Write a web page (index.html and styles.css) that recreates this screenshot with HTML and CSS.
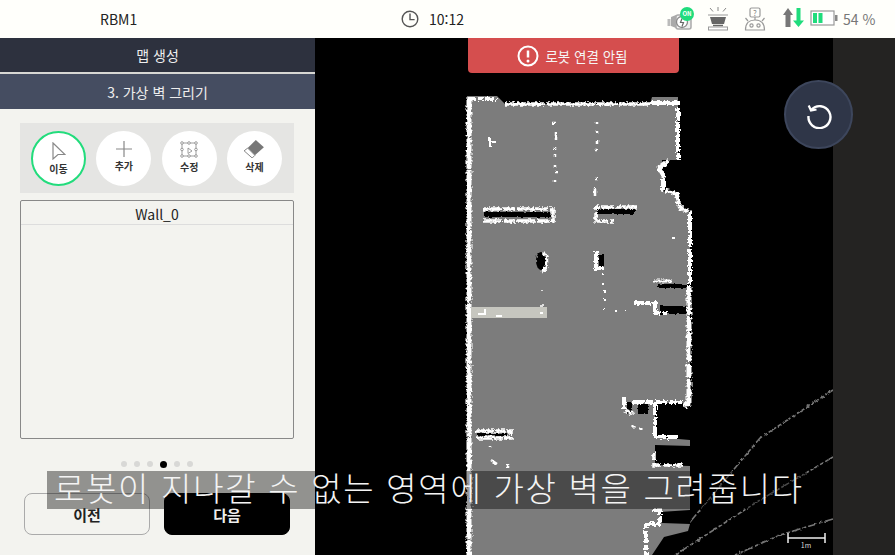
FILE: index.html
```html
<!DOCTYPE html>
<html lang="ko">
<head>
<meta charset="UTF-8">
<meta name="viewport" content="width=device-width, initial-scale=1.0">
<title>맵 생성</title>
<link rel="stylesheet" href="styles.css">
</head>
<body>
    <div class="screen">
        <header class="statusbar">
            <div class="robot-name">RBM1</div>
            <div class="clock">
                <svg width="20" height="20" viewBox="0 0 20 20" fill="none" stroke="#555" stroke-width="1.4"><circle cx="10" cy="10" r="7.8"/><path d="M10 4.5V10.6H14.6"/></svg>
                <span>10:12</span>
            </div>
            <div class="status-icons">
                <svg class="ic-camera" width="28" height="24" viewBox="0 0 28 24" fill="none">
                    <rect x="0.500" y="12" width="3" height="7" fill="#bbb"/>
                    <path d="M4 10l5-2v13l-5-2z" fill="#aaa"/>
                    <rect x="9" y="8" width="15" height="14" rx="2" fill="#eee" stroke="#aaa" stroke-width="1.500"/>
                    <circle cx="15" cy="15" r="5.500" fill="#fff" stroke="#888" stroke-width="1.300"/>
                    <path d="M15 11.500l-1.500 4h3l-1.500 4" stroke="#666" stroke-width="1.200"/>
                    <circle cx="20" cy="7" r="7" fill="#1fdc7c"/>
                    <text x="20" y="9" class="badge-text">ON</text>
                </svg>
                <svg class="ic-pot" width="22" height="24" viewBox="0 0 22 24" fill="none" stroke="#888">
                    <path d="M11 0v4M3 1l3 3.500M19 1l-3 3.500" stroke-width="1"/>
                    <path d="M1 8h20" stroke="#aaa" stroke-width="1.200"/>
                    <path d="M3 10h16l-2 7H5z" fill="#666" stroke="none"/>
                    <path d="M6 18.500h10" stroke="#666" stroke-width="1.500"/>
                    <rect x="1.500" y="20" width="19" height="3" fill="#fff" stroke="#999"/>
                </svg>
                <svg class="ic-robot" width="22" height="24" viewBox="0 0 22 24" fill="none" stroke="#999" stroke-width="1.200">
                    <rect x="6" y="1" width="10" height="9" rx="1.500"/>
                    <path d="M1.500 23C1.500 16 5 13 11 13S20.500 16 20.500 23z"/>
                    <path d="M4 14L1.500 11M18 14L20.500 11M11 10v3"/>
                    <circle cx="7.500" cy="18.500" r="1.600"/>
                    <circle cx="14.500" cy="18.500" r="1.600"/>
                    <text x="11" y="8.500" class="robot-mark">?</text>
                </svg>
                <svg class="ic-arrows" width="22" height="20" viewBox="0 0 22 20">
                    <path d="M6 0l5 7H8.500v12h-5V7H1z" fill="#777"/>
                    <path d="M14.500 0h4v12.500H22L16.500 19 11 12.500h3.500z" fill="#1fdc7c"/>
                </svg>
                <svg class="ic-battery" width="28" height="16" viewBox="0 0 28 16">
                    <rect x="1" y="1" width="23" height="14" fill="#fff" stroke="#999" stroke-width="1.200"/>
                    <rect x="3" y="3" width="4" height="10" fill="#1fdc7c"/>
                    <rect x="8.500" y="3" width="4" height="10" fill="#1fdc7c"/>
                    <rect x="25" y="5" width="2.500" height="6" fill="#888"/>
                </svg>
                <span class="battery-text">54 %</span>
            </div>
        </header>

        <div class="main">
            <aside class="panel">
                <div class="panel-title">맵 생성</div>
                <div class="panel-step">3. 가상 벽 그리기</div>
                <div class="panel-body">
                    <div class="toolbar">
                        <div class="tool active">
                            <svg width="14" height="18" viewBox="0 0 14 18" fill="none" stroke="#888" stroke-width="1.200"><path d="M1 1l12 11.500H6L1 17z"/></svg>
                            <span>이동</span>
                        </div>
                        <div class="tool">
                            <svg width="16" height="16" viewBox="0 0 16 16" stroke="#888" stroke-width="1.200"><path d="M8 0v16M0 8h16"/></svg>
                            <span>추가</span>
                        </div>
                        <div class="tool">
                            <svg width="18" height="17" viewBox="0 0 18 17" fill="none" stroke="#888" stroke-width="0.800"><rect x="2" y="2" width="14" height="13"/><g fill="#fff"><circle cx="2" cy="2" r="1.300"/><circle cx="9" cy="2" r="1.300"/><circle cx="16" cy="2" r="1.300"/><circle cx="2" cy="8.500" r="1.300"/><circle cx="16" cy="8.500" r="1.300"/><circle cx="2" cy="15" r="1.300"/><circle cx="9" cy="15" r="1.300"/><circle cx="16" cy="15" r="1.300"/></g><path d="M8 7l4 3-4 2.500z"/></svg>
                            <span>수정</span>
                        </div>
                        <div class="tool tool-erase">
                            <svg width="20" height="18" viewBox="0 0 22 20"><path d="M13 0l9 8-10 9-8-8z" fill="#777"/><path d="M4 9l8 8-3 3-9-8z" fill="#fff" stroke="#777"/></svg>
                            <span>삭제</span>
                        </div>
                    </div>
                    <div class="wall-list">
                        <div class="wall-row">Wall_0</div>
                    </div>
                    <div class="pager">
                        <i></i><i></i><i></i><i class="on"></i><i></i><i></i>
                    </div>
                    <div class="buttons">
                        <button class="btn">이전</button>
                        <button class="btn btn-dark">다음</button>
                    </div>
                </div>
            </aside>

            <div class="map">
                <svg class="map-canvas" width="518" height="517" viewBox="315 38 518 517">
                    <defs>
                        <filter id="rough" x="-5%" y="-5%" width="110%" height="110%" color-interpolation-filters="sRGB">
                            <feTurbulence type="fractalNoise" baseFrequency="0.4" numOctaves="2" seed="4"/>
                            <feDisplacementMap in="SourceGraphic" scale="5" xChannelSelector="R" yChannelSelector="G"/>
                        </filter>
                        <filter id="rough-soft" x="-5%" y="-5%" width="110%" height="110%" color-interpolation-filters="sRGB">
                            <feTurbulence type="fractalNoise" baseFrequency="0.3" numOctaves="2" seed="9"/>
                            <feDisplacementMap in="SourceGraphic" scale="3" xChannelSelector="R" yChannelSelector="G"/>
                        </filter>
                    </defs>

                    <!-- rays outside the room -->
                    <g fill="none" stroke="#777" stroke-width="1.600" stroke-dasharray="9 2 4 2" filter="url(#rough-soft)">
                        <path d="M833 390L760 438 690 522"/>
                        <path d="M833 457L760 500 675 555"/>
                        <path d="M833 519L780 535 735 555"/>
                    </g>

                    <!-- floor -->
                    <path class="floor" d="M467 96H497L505 104H650L652 97H678V160H662V191L678 194 680 208 690 212V403H655V437L690 440V446L655 445V465L690 466V510L660 512 662 523 690 524 688 531 664 537 652 555H467z"/>

                    <!-- black holes in the notches -->
                    <g fill="#000" filter="url(#rough-soft)">
                        <rect x="484" y="212" width="67" height="5"/>
                        <rect x="597" y="209" width="38" height="5"/>
                        <ellipse cx="541" cy="261" rx="5" ry="9"/>
                        <rect x="599" y="255" width="5" height="13"/>
                        <rect x="658" y="284" width="32" height="4"/>
                        <rect x="660" y="306" width="30" height="8"/>
                        <rect x="627" y="402" width="5" height="12"/>
                        <rect x="638" y="404" width="10" height="10"/>
                        <rect x="477" y="433" width="30" height="3"/>
                    </g>

                    <!-- walls -->
                    <g fill="none" stroke="#fff" filter="url(#rough)">
                        <path d="M469 97V555" stroke-width="5" stroke-dasharray="40 1 30 2 60 1"/>
                        <path d="M468 99H497" stroke-width="4" stroke-dasharray="8 2 5 3"/>
                        <path d="M505 104H650" stroke-width="3.500" stroke-dasharray="40 1 50 1 20 2"/>
                        <path d="M650 103H678V160" stroke-width="4" stroke-dasharray="30 2 14 1"/>
                        <path d="M668 161L659 168 663 175V190L677 194 680 208 690 212V285" stroke-width="4" stroke-dasharray="22 1 12 2"/>
                        <path d="M689 285V403L684 406" stroke-width="5" stroke-dasharray="30 2 14 1"/>
                        <path d="M484 209H553V221H484" stroke-width="3.500" stroke-dasharray="18 1 12 2"/>
                        <path d="M637 207H596V221H614" stroke-width="3.500" stroke-dasharray="14 1 6 2"/>
                        <path d="M544 252C548 256 548 270 542 272" stroke-width="3"/>
                        <path d="M599 253H596V268H604" stroke-width="4"/>
                        <path d="M654 281H672" stroke-width="3"/>
                        <path d="M634 303H655V313H668" stroke-width="4" stroke-dasharray="10 1 6 2"/>
                        <path d="M624 397V410L634 414M632 402H682M655 403V437H678" stroke-width="4" stroke-dasharray="12 2 8 1"/>
                        <path d="M654 452V465H684" stroke-width="3.500" stroke-dasharray="9 2"/>
                        <path d="M476 431H511V438H476" stroke-width="3.500" stroke-dasharray="9 1"/>
                        <path d="M653 510H660V524H646V555" stroke-width="4" stroke-dasharray="12 2 5 2"/>
                    </g>

                    <!-- scattered scan dots -->
                    <g fill="none" stroke="#fff" stroke-width="2" filter="url(#rough-soft)">
                        <path d="M555 123h-3M556 132v8M555 147v3M555 154v3M555 165v3M555 172h3M555 180v2" stroke-width="2.500"/>
                        <path d="M597 122v2M597 131v2M597 140v4M595 150h2M595 179h3M595 188v8" stroke-width="2.500"/>
                        <path d="M490 137v10M490 142h6" stroke-width="2"/>
                        <path d="M603 273v2M603 283v2M605 290v3M605 298v3M604 308v2M615 311h2M625 310v1M672 238h3" stroke-width="2"/>
                        <path d="M542 290v1M542 305v2" stroke-width="1.500"/>
                        <path d="M632 425l3 3M641 428v2" stroke-width="3"/>
                        <path d="M490 446v1M491 460l6 4M508 464v4" stroke-width="2.500"/>
                    </g>

                    <!-- virtual wall -->
                    <rect x="471" y="307" width="76" height="11" fill="#c6c6bf"/>
                    <path d="M478 314h8M485 309v6M496 316h6M540 313h3" stroke="#fff" stroke-width="2" fill="none"/>

                    <!-- scale -->
                    <path d="M788 533V543M825 533V543M788 538H825" class="scale-line"/>
                    <text x="806" y="548" class="scale-text">1m</text>
                </svg>

                <div class="alert">
                    <svg width="22" height="22" viewBox="0 0 22 22" fill="none"><circle cx="11" cy="11" r="9.500" stroke="#fff" stroke-width="2"/><path d="M11 5.500V12.500" stroke="#fff" stroke-width="2.500"/><circle cx="11" cy="16" r="1.500" fill="#fff"/></svg>
                    <span>로봇 연결 안됨</span>
                </div>

                <button class="reset">
                    <svg width="28" height="28" viewBox="0 0 28 28" fill="none" stroke="#fff" stroke-width="2.400"><path d="M6.500 8.500A11 11 0 1 1 3.500 15"/><path d="M3.700 4.500L6 9.500 11.500 8.500" stroke-width="2.200"/></svg>
                </button>
            </div>

            <div class="side"></div>
        </div>

        <div class="caption">로봇이 지나갈 수 없는 영역에 가상 벽을 그려줍니다</div>
    </div>
</body>
</html>
```

FILE: styles.css
```css
body {
    font-family: "Noto Sans CJK KR", "Noto Sans", sans-serif;
    margin: 0;
    padding: 0;
    background-color: #000;
}

.screen {
    position: relative;
    width: 895px;
    height: 555px;
    overflow: hidden;
}

/* top bar */
.statusbar {
    display: flex;
    align-items: center;
    height: 38px;
    background-color: #fffffb;
    color: #222;
    font-size: 14px;
}

.robot-name {
    width: 400px;
    padding-left: 100px;
    box-sizing: border-box;
}

.clock {
    display: flex;
    align-items: center;
    gap: 9px;
    width: 267px;
}

.clock span {
    font-size: 14px;
}

.status-icons {
    display: flex;
    align-items: center;
    color: #777;
}

.ic-camera { margin-right: 12px; margin-bottom: 1px; }
.ic-pot { margin-right: 15px; }
.ic-robot { margin-right: 16px; }
.ic-arrows { margin-right: 6px; margin-bottom: 2px; }
.ic-battery { margin-right: 5px; margin-bottom: 2px; }

.battery-text {
    font-size: 14px;
}

.badge-text {
    font-size: 6px;
    font-weight: bold;
    fill: #fff;
    text-anchor: middle;
}

.robot-mark {
    font-size: 8px;
    fill: #888;
    stroke: none;
    text-anchor: middle;
}

.main {
    display: flex;
    height: 517px;
}

/* left panel */
.panel {
    width: 315px;
    flex-shrink: 0;
    background-color: #f3f3ef;
    display: flex;
    flex-direction: column;
}

.panel-title {
    height: 34px;
    line-height: 35px;
    background-color: #2d313e;
    color: #eee;
    font-size: 14px;
    text-align: center;
    border-bottom: 2px solid #d8d8d4;
}

.panel-step {
    height: 35px;
    line-height: 37px;
    background-color: #454d61;
    color: #eee;
    font-size: 14px;
    text-align: center;
}

.panel-body {
    flex: 1;
    padding: 14px 21px 0 20px;
    display: flex;
    flex-direction: column;
}

.toolbar {
    display: flex;
    justify-content: space-between;
    height: 70px;
    padding: 8px 12px 0 11px;
    box-sizing: border-box;
    background-color: #e5e5e3;
}

.tool {
    width: 55px;
    height: 55px;
    box-sizing: border-box;
    border-radius: 50%;
    background-color: #fff;
    display: flex;
    flex-direction: column;
    align-items: center;
    padding-top: 10px;
    color: #333;
    font-size: 10px;
    font-weight: bold;
    line-height: 13px;
}

.tool svg {
    flex-shrink: 0;
    margin-bottom: 2px;
}

.tool.active {
    border: 2px solid #22dc7c;
    padding-top: 9px;
}

.tool-erase {
    padding-top: 9px;
}

.wall-list {
    margin-top: 7px;
    height: 239px;
    box-sizing: border-box;
    border: 1px solid #888;
    border-radius: 2px;
}

.wall-row {
    height: 23px;
    line-height: 26px;
    border-bottom: 1px solid #ddd;
    color: #222;
    font-size: 14px;
    text-align: center;
}

.pager {
    display: flex;
    justify-content: center;
    align-items: center;
    gap: 7px;
    height: 12px;
    margin-top: 19px;
    margin-right: 1px;
}

.pager i {
    width: 6px;
    height: 6px;
    border-radius: 50%;
    background-color: #d8d8d6;
}

.pager i.on {
    width: 7px;
    height: 7px;
    background-color: #000;
}

.buttons {
    display: flex;
    gap: 14px;
    margin-top: 23px;
    padding-left: 4px;
}

.btn {
    width: 126px;
    height: 42px;
    border: 1px solid #aaa;
    border-radius: 8px;
    background: none;
    color: #222;
    font-family: inherit;
    font-size: 15px;
    font-weight: bold;
    padding: 1px 0 0;
}

.btn-dark {
    background-color: #000;
    border-color: #000;
    color: #eee;
}

/* map */
.map {
    position: relative;
    flex: 1;
    background-color: #000;
}

.map-canvas {
    display: block;
}

.floor {
    fill: #7c7c7c;
}

.scale-line {
    fill: none;
    stroke: #eee;
    stroke-width: 1.500;
}

.scale-text {
    font-size: 7px;
    fill: #ddd;
    text-anchor: middle;
}

.alert {
    position: absolute;
    top: 0;
    left: 153px;
    width: 211px;
    height: 35px;
    box-sizing: border-box;
    display: flex;
    align-items: center;
    justify-content: center;
    gap: 6px;
    padding-right: 2px;
    background-color: #d54e4e;
    border-radius: 0 0 4px 4px;
    color: #f5f5f5;
    font-size: 13.500px;
}

.reset {
    position: absolute;
    top: 42px;
    left: 469px;
    width: 69px;
    height: 69px;
    padding: 0;
    display: flex;
    align-items: center;
    justify-content: center;
    border-radius: 50%;
    border: 2px solid #3d465c;
    background-color: #2f3648;
}

.side {
    width: 62px;
    flex-shrink: 0;
    background-color: #242322;
}

/* subtitle over the video */
.caption {
    position: absolute;
    left: 47px;
    top: 471px;
    width: 760px;
    height: 38px;
    line-height: 33px;
    padding-left: 7px;
    box-sizing: border-box;
    background-color: rgba(0, 0, 0, 0.4);
    color: #f4f4f4;
    font-size: 33px;
    font-weight: 200;
    letter-spacing: 1.700px;
    white-space: nowrap;
}
```
